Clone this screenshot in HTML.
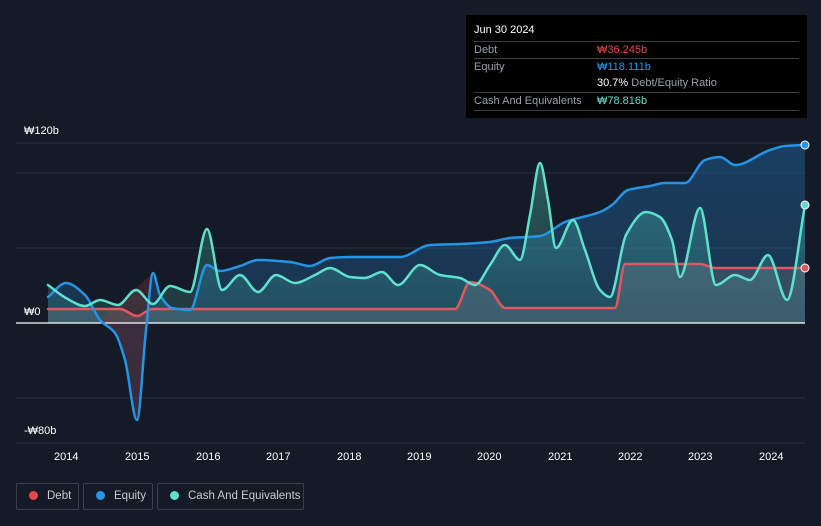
<!DOCTYPE html>
<html><head><meta charset="utf-8"><style>
html,body{margin:0;width:821px;height:526px;overflow:hidden}
body{background:#151b26;font-family:"Liberation Sans","Noto Sans CJK KR",sans-serif;position:relative}
.ax{position:absolute;color:#fff;font-size:11px;white-space:nowrap}
.tt{position:absolute;left:466px;top:15px;width:341px;height:103px;background:#000;font-size:11px;color:#9aa0a8}
.tt .r{position:absolute;left:8px;right:8px;border-top:1px solid #3a3f47;height:17px;line-height:17px}
.lg{position:absolute;top:483px;height:27px;border:1px solid #3a404b;border-radius:2px;color:#c8ccd2;font-size:11.5px;line-height:25px;box-sizing:border-box;white-space:nowrap}
.lg i{display:inline-block;width:9px;height:9px;border-radius:50%;margin:0 9px 0 12px;vertical-align:-1px}
</style></head><body>
<svg width="821" height="526" style="position:absolute;left:0;top:0">
<defs>
<linearGradient id="gb" x1="0" y1="0" x2="0" y2="1"><stop offset="0" stop-color="#1f5d92" stop-opacity=".55"/><stop offset="1" stop-color="#1f5d92" stop-opacity=".25"/></linearGradient>
<linearGradient id="gc" x1="0" y1="0" x2="0" y2="1"><stop offset="0" stop-color="#4fd1c0" stop-opacity=".35"/><stop offset="1" stop-color="#4fd1c0" stop-opacity=".15"/></linearGradient>
</defs>
<g stroke="#2a303b" stroke-width="1">
<line x1="16" y1="143" x2="805" y2="143"/><line x1="16" y1="173" x2="805" y2="173"/><line x1="16" y1="248" x2="805" y2="248"/><line x1="16" y1="398" x2="805" y2="398"/><line x1="16" y1="443" x2="805" y2="443"/>
</g>
<path id="fe" fill="url(#gb)"/>
<path id="fc" fill="url(#gc)"/>
<path id="fn" fill="#5a2a33" fill-opacity=".55"/>
<path id="fd" fill="#8a8f99" fill-opacity=".25"/>
<line x1="16" y1="323" x2="805" y2="323" stroke="#fff" stroke-width="1.2"/>
<g fill="none" stroke-width="2.5" stroke-linejoin="round" stroke-linecap="round">
<path id="ld" stroke="#e2575d"/>
<path id="le" stroke="#2494e6"/>
<path id="lc" stroke="#5fe0cd"/>
</g>
<circle cx="805" cy="145" r="4" fill="#2494e6" stroke="#fff" stroke-width="1"/>
<circle cx="805" cy="205" r="4" fill="#5fe0cd" stroke="#fff" stroke-width="1"/>
<circle cx="805" cy="268" r="4" fill="#e2575d" stroke="#fff" stroke-width="1"/>
</svg>
<script>
function sm(p){var n=p.length,s=[],m=[];for(var i=0;i<n-1;i++)s.push((p[i+1][1]-p[i][1])/(p[i+1][0]-p[i][0]));
for(var i=0;i<n;i++){if(i==0)m.push(s[0]);else if(i==n-1)m.push(s[n-2]);else if(s[i-1]*s[i]<=0)m.push(0);else m.push(2/(1/s[i-1]+1/s[i]));}
var d="M"+p[0][0]+","+p[0][1];for(var i=0;i<n-1;i++){var h=(p[i+1][0]-p[i][0])/3;d+=" C"+(p[i][0]+h).toFixed(1)+","+(p[i][1]+m[i]*h).toFixed(1)+" "+(p[i+1][0]-h).toFixed(1)+","+(p[i+1][1]-m[i+1]*h).toFixed(1)+" "+p[i+1][0]+","+p[i+1][1];}return d;}
var E=[[48,297],[66,283],[85,295],[100,320],[115,333],[125,360],[137,420],[146,330],[153,273],[160,295],[172,308],[190,310],[207,265],[220,271],[240,266],[258,260],[290,262],[310,266],[330,258],[350,257],[400,257],[430,245],[460,244],[490,242],[510,238],[540,236],[565,222],[600,212],[612,205],[628,190],[650,186],[665,183],[685,183],[705,160],[720,157],[735,165],[770,150],[785,146],[805,145]];
var C=[[48,285],[66,298],[85,306],[100,300],[118,305],[136,290],[153,304],[170,286],[190,292],[207,229],[222,290],[240,275],[258,292],[276,275],[295,283],[315,275],[330,268],[350,277],[365,278],[382,272],[398,285],[420,265],[440,275],[460,278],[475,285],[490,265],[505,245],[520,260],[530,215],[540,163],[548,200],[556,248],[573,220],[585,250],[600,290],[610,297],[626,235],[646,212],[660,217],[672,240],[680,277],[700,208],[716,285],[735,275],[750,280],[768,255],[787,300],[805,205]];
var D=[[48,309],[120,309],[137,316],[152,309],[455,309],[470,282],[490,290],[505,308],[615,308],[625,264],[700,264],[715,268],[805,268]];
var de=sm(E),dc=sm(C),dd=sm(D);
function g(i){return document.getElementById(i)}
g("le").setAttribute("d",de);g("lc").setAttribute("d",dc);g("ld").setAttribute("d",dd);
g("fe").setAttribute("d",de+" L805,323 L48,323Z");
g("fc").setAttribute("d",dc+" L805,323 L48,323Z");
g("fd").setAttribute("d",dd+" L805,323 L48,323Z");
g("fn").setAttribute("d",sm(E.slice(3,9))+" L100,320Z");
</script>
<div class="ax" style="left:24px;top:125px">₩120b</div>
<div class="ax" style="left:24px;top:306px">₩0</div>
<div class="ax" style="left:24px;top:425px">-₩80b</div>
<div class="ax" style="left:54px;top:451px">2014</div><div class="ax" style="left:125px;top:451px">2015</div><div class="ax" style="left:196px;top:451px">2016</div><div class="ax" style="left:266px;top:451px">2017</div><div class="ax" style="left:337px;top:451px">2018</div><div class="ax" style="left:407px;top:451px">2019</div><div class="ax" style="left:477px;top:451px">2020</div><div class="ax" style="left:548px;top:451px">2021</div><div class="ax" style="left:618px;top:451px">2022</div><div class="ax" style="left:688px;top:451px">2023</div><div class="ax" style="left:759px;top:451px">2024</div>
<div class="tt">
<div style="position:absolute;left:8px;top:9px;color:#fff">Jun 30 2024</div>
<div class="r" style="top:26px">Debt<span style="position:absolute;left:123px;color:#e2474d">₩36.245b</span></div>
<div class="r" style="top:43px">Equity<span style="position:absolute;left:123px;color:#2494e6">₩118.111b</span></div>
<div class="r" style="top:60px;border:0"><span style="position:absolute;left:123px"><b style="color:#fff;font-weight:normal">30.7%</b> Debt/Equity Ratio</span></div>
<div class="r" style="top:77px">Cash And Equivalents<span style="position:absolute;left:123px;color:#5fe0cd">₩78.816b</span></div>
<div class="r" style="top:95px;height:0"></div>
</div>
<div class="lg" style="left:16px;width:63px"><i style="background:#e2474d"></i>Debt</div>
<div class="lg" style="left:83px;width:70px"><i style="background:#2494e6"></i>Equity</div>
<div class="lg" style="left:157px;width:147px"><i style="background:#5fe0cd"></i>Cash And Equivalents</div>
</body></html>
